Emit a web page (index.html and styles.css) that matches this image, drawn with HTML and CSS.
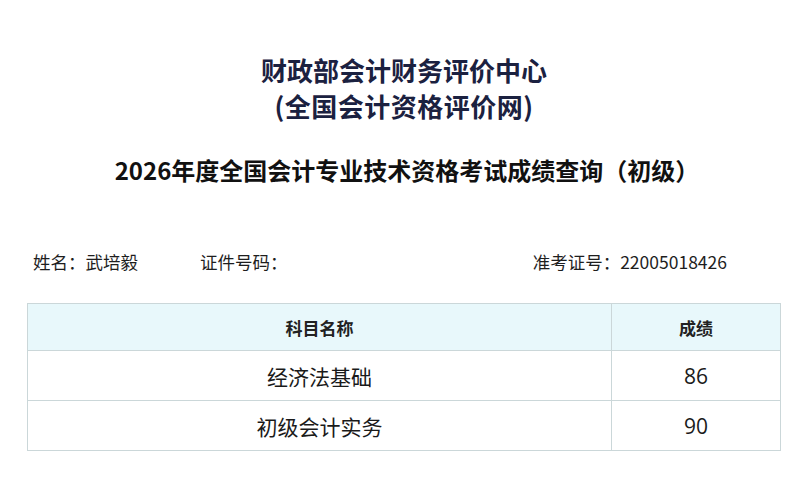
FILE: index.html
```html
<!DOCTYPE html>
<html lang="zh-CN">
<head>
<meta charset="utf-8">
<title>成绩查询</title>
<link rel="stylesheet" href="styles.css">
</head>
<body>
<div class="page">
  <header class="org">
    <div class="org-name">财政部会计财务评价中心</div>
    <div class="org-sub">(全国会计资格评价网)</div>
  </header>
  <h1 class="exam-title">2026年度全国会计专业技术资格考试成绩查询（初级）</h1>
  <div class="info">
    <span class="info-name">姓名：武培毅</span>
    <span class="info-id">证件号码：</span>
    <span class="info-ticket">准考证号：22005018426</span>
  </div>
  <table class="scores">
    <thead>
      <tr><th class="col-subject">科目名称</th><th class="col-score">成绩</th></tr>
    </thead>
    <tbody>
      <tr><td>经济法基础</td><td class="num">86</td></tr>
      <tr><td>初级会计实务</td><td class="num">90</td></tr>
    </tbody>
  </table>
</div>
</body>
</html>
```

FILE: styles.css
```css
html, body {
  margin: 0;
  padding: 0;
  background: #ffffff;
}
body {
  font-family: "Noto Sans CJK SC", "Noto Sans", sans-serif;
  color: #1a1a1a;
}
.page {
  width: 800px;
  height: 482px;
  padding: 0 19px 0 27px;
  box-sizing: border-box;
  display: flex;
  flex-direction: column;
}
.org {
  margin-top: 52px;
  text-align: center;
  color: #1b2140;
  font-weight: 700;
  font-size: 26px;
  line-height: 36px;
}
.org-sub {
  letter-spacing: 0.5px;
}
.exam-title {
  margin: 30px 0 0;
  text-align: center;
  font-size: 24px;
  line-height: 32px;
  font-weight: 700;
  color: #111111;
  padding-left: 6px;
}
.info {
  margin-top: 64px;
  display: flex;
  font-size: 17.5px;
  line-height: 24px;
  color: #1e1e1e;
  padding-left: 6px;
}
.info-name {
  width: 167px;
}
.info-id {
  flex: 1;
}
.info-ticket {
  margin-right: 54px;
}
.scores {
  margin-top: 29px;
  width: 754px;
  border-collapse: collapse;
  border: 1.5px solid #cbd7d9;
}
.scores th, .scores td {
  border: 1.5px solid #cbd7d9;
  text-align: center;
  padding: 0;
}
.scores th {
  height: 46px;
  background: #e8f8fb;
  font-size: 17px;
  font-weight: 700;
  color: #222222;
}
.scores td {
  height: 49px;
  font-size: 21px;
  color: #1a1a1a;
}
.col-subject {
  width: 583px;
}
.num {
  font-family: "Open Sans", "Noto Sans", sans-serif;
  font-size: 22px;
}
```
